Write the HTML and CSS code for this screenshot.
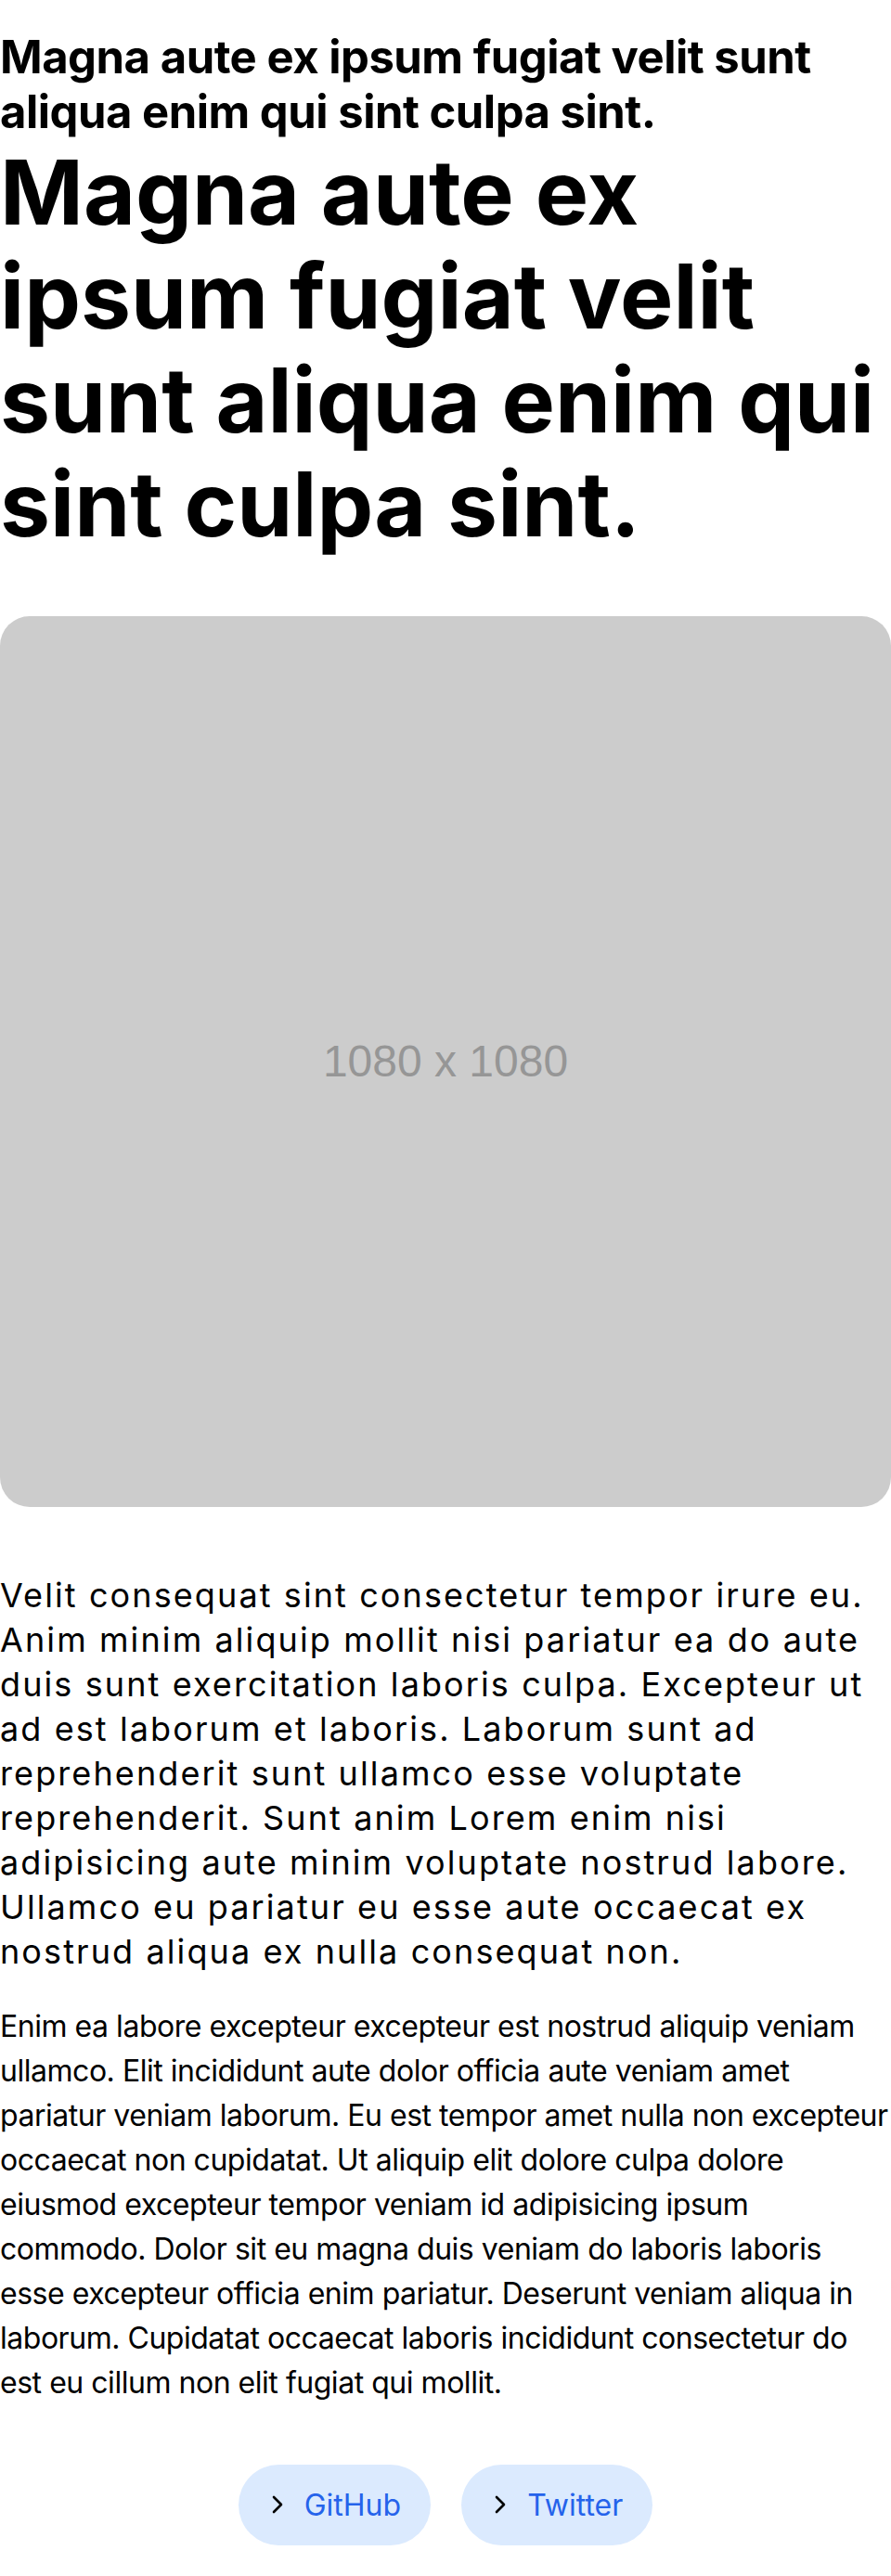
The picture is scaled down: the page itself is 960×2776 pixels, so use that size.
FILE: index.html
```html
<!DOCTYPE html>
<html lang="en">
<head>
<meta charset="utf-8">
<title>Magna aute ex</title>
<link rel="stylesheet" href="styles.css">
</head>
<body>
<main class="page">
  <h2 class="kicker">Magna aute ex ipsum fugiat velit sunt aliqua enim qui sint culpa sint.</h2>
  <h1 class="title">Magna aute ex ipsum fugiat velit sunt aliqua enim qui sint culpa sint.</h1>
  <div class="media"><span class="media-label">1080 x 1080</span></div>
  <p class="lead">Velit consequat sint consectetur tempor irure eu. Anim minim aliquip mollit nisi pariatur ea do aute duis sunt exercitation laboris culpa. Excepteur ut ad est laborum et laboris. Laborum sunt ad reprehenderit sunt ullamco esse voluptate reprehenderit. Sunt anim Lorem enim nisi adipisicing aute minim voluptate nostrud labore. Ullamco eu pariatur eu esse aute occaecat ex nostrud aliqua ex nulla consequat non.</p>
  <p class="body">Enim ea labore excepteur excepteur est nostrud aliquip veniam ullamco. Elit incididunt aute dolor officia aute veniam amet pariatur veniam laborum. Eu est tempor amet nulla non excepteur occaecat non cupidatat. Ut aliquip elit dolore culpa dolore eiusmod excepteur tempor veniam id adipisicing ipsum commodo. Dolor sit eu magna duis veniam do laboris laboris esse excepteur officia enim pariatur. Deserunt veniam aliqua in laborum. Cupidatat occaecat laboris incididunt consectetur do est eu cillum non elit fugiat qui mollit.</p>
  <nav class="links">
    <a class="pill" href="#"><svg class="chev" viewBox="0 0 14 24" width="14" height="24"><polyline points="3,4 11,12 3,20" fill="none" stroke="#000" stroke-width="2.6" stroke-linecap="round" stroke-linejoin="round"/></svg><span>GitHub</span></a>
    <a class="pill" href="#"><svg class="chev" viewBox="0 0 14 24" width="14" height="24"><polyline points="3,4 11,12 3,20" fill="none" stroke="#000" stroke-width="2.6" stroke-linecap="round" stroke-linejoin="round"/></svg><span>Twitter</span></a>
  </nav>
</main>
</body>
</html>
```

FILE: styles.css
```css
html, body {
  margin: 0;
  padding: 0;
  background: #fff;
}
body {
  font-family: Inter, "Noto Sans", sans-serif;
  color: #000;
}
.page {
  display: flex;
  flex-direction: column;
  padding-top: 33px;
  padding-bottom: 33px;
}
.kicker {
  margin: 0;
  font-size: 49px;
  line-height: 1.2;
  font-weight: 700;
  letter-spacing: -0.01em;
}
.title {
  margin: 0;
  font-size: 96.5px;
  line-height: 112px;
  font-weight: 700;
}
.media {
  margin-top: 65px;
  height: 960px;
  background: #cccccc;
  border-radius: 32px;
  display: flex;
  align-items: center;
  justify-content: center;
}
.media-label {
  font-family: "Liberation Sans", Arial, sans-serif;
  font-size: 48px;
  color: #969696;
}
.lead {
  margin: 71px 0 0;
  font-size: 36px;
  line-height: 48px;
  letter-spacing: 2.1px;
}
.body {
  margin: 33px 0 0;
  font-size: 32px;
  line-height: 48px;
  letter-spacing: -0.47px;
}
.links {
  margin-top: 64px;
  display: flex;
  justify-content: center;
  gap: 33px;
}
.pill {
  display: flex;
  align-items: center;
  gap: 22px;
  height: 87px;
  padding: 0 32px 0 35px;
  border-radius: 44px;
  background: #dbeafe;
  color: #2563eb;
  text-decoration: none;
  font-size: 32px;
}
.chev {
  display: block;
}
```
